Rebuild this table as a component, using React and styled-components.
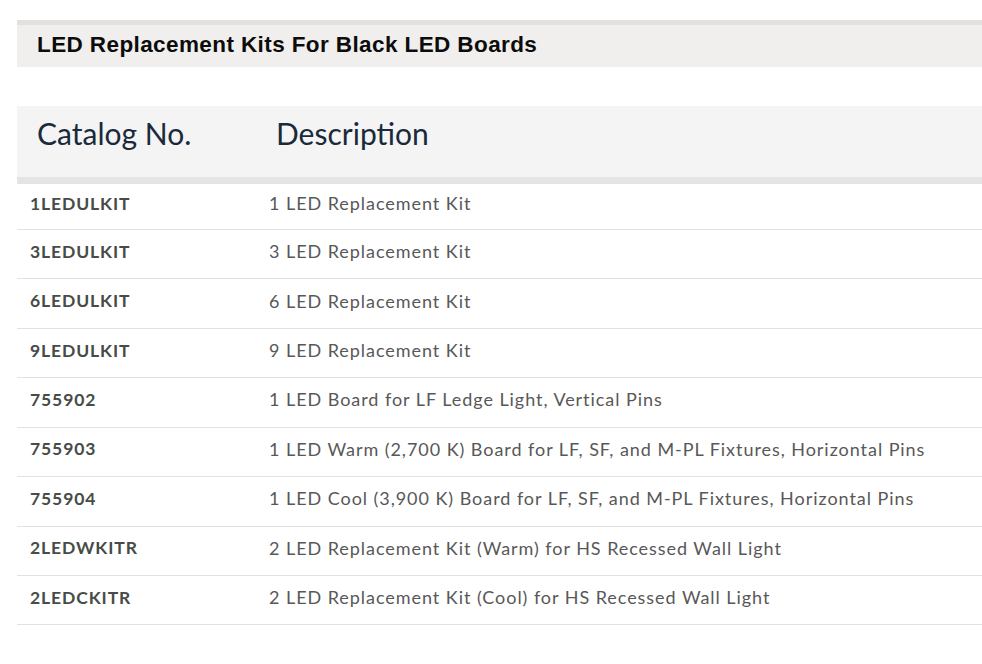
import React from "react";
import styled, { createGlobalStyle } from "styled-components";

const Global = createGlobalStyle`
  html, body { margin: 0; padding: 0; background: #ffffff; }
  body { font-family: "Lato", "Open Sans", sans-serif; }
`;

const Page = styled.div`
  width: 982px;
  padding: 20px 0 0 17px;
  box-sizing: border-box;
`;

const TitleBar = styled.div`
  height: 47px;
  box-sizing: border-box;
  border-top: 5px solid #e3e1dd;
  background: #f0efed;
  display: flex;
  align-items: center;
  padding-left: 20px;
  padding-bottom: 3px;
`;

const Title = styled.h2`
  margin: 0;
  font-family: "Liberation Sans", Arial, sans-serif;
  font-weight: 700;
  font-size: 22.5px;
  color: #0c0c0c;
  letter-spacing: 0.4px;
`;

const Table = styled.table`
  margin-top: 39px;
  width: 100%;
  border-collapse: collapse;
  table-layout: fixed;
`;

const HeadRow = styled.tr`
  background: #f4f4f4;
`;

const HeadCell = styled.th`
  height: 74px;
  box-sizing: border-box;
  border-bottom: 7px solid #e4e4e4;
  text-align: left;
  font-family: "Lato", sans-serif;
  font-weight: 400;
  font-size: 30px;
  color: #1a2a3b;
  padding: 0 0 16px ${(p) => p.$pad}px;
  width: ${(p) => (p.$w ? p.$w + "px" : "auto")};
`;

const Row = styled.tr`
  height: 49.44px;
  border-bottom: 1px solid #e2e2e2;
`;

const CodeCell = styled.td`
  padding: 0 0 6px 13px;
  font-family: "Lato", sans-serif;
  font-weight: 700;
  font-size: 17.5px;
  letter-spacing: 0.9px;
  color: #474c47;
`;

const DescCell = styled.td`
  padding: 0 0 6px 13px;
  font-family: "Lato", sans-serif;
  font-weight: 400;
  font-size: 18px;
  letter-spacing: 0.95px;
  color: #585858;
`;

const rows = [
  ["1LEDULKIT", "1 LED Replacement Kit"],
  ["3LEDULKIT", "3 LED Replacement Kit"],
  ["6LEDULKIT", "6 LED Replacement Kit"],
  ["9LEDULKIT", "9 LED Replacement Kit"],
  ["755902", "1 LED Board for LF Ledge Light, Vertical Pins"],
  ["755903", "1 LED Warm (2,700 K) Board for LF, SF, and M-PL Fixtures, Horizontal Pins"],
  ["755904", "1 LED Cool (3,900 K) Board for LF, SF, and M-PL Fixtures, Horizontal Pins"],
  ["2LEDWKITR", "2 LED Replacement Kit (Warm) for HS Recessed Wall Light"],
  ["2LEDCKITR", "2 LED Replacement Kit (Cool) for HS Recessed Wall Light"],
];

export default function App() {
  return (
    <Page>
      <Global />
      <TitleBar>
        <Title>LED Replacement Kits For Black LED Boards</Title>
      </TitleBar>
      <Table>
        <thead>
          <HeadRow>
            <HeadCell $pad={20} $w={239}>Catalog No.</HeadCell>
            <HeadCell $pad={20}>Description</HeadCell>
          </HeadRow>
        </thead>
        <tbody>
          {rows.map(([code, desc]) => (
            <Row key={code}>
              <CodeCell>{code}</CodeCell>
              <DescCell>{desc}</DescCell>
            </Row>
          ))}
        </tbody>
      </Table>
    </Page>
  );
}
